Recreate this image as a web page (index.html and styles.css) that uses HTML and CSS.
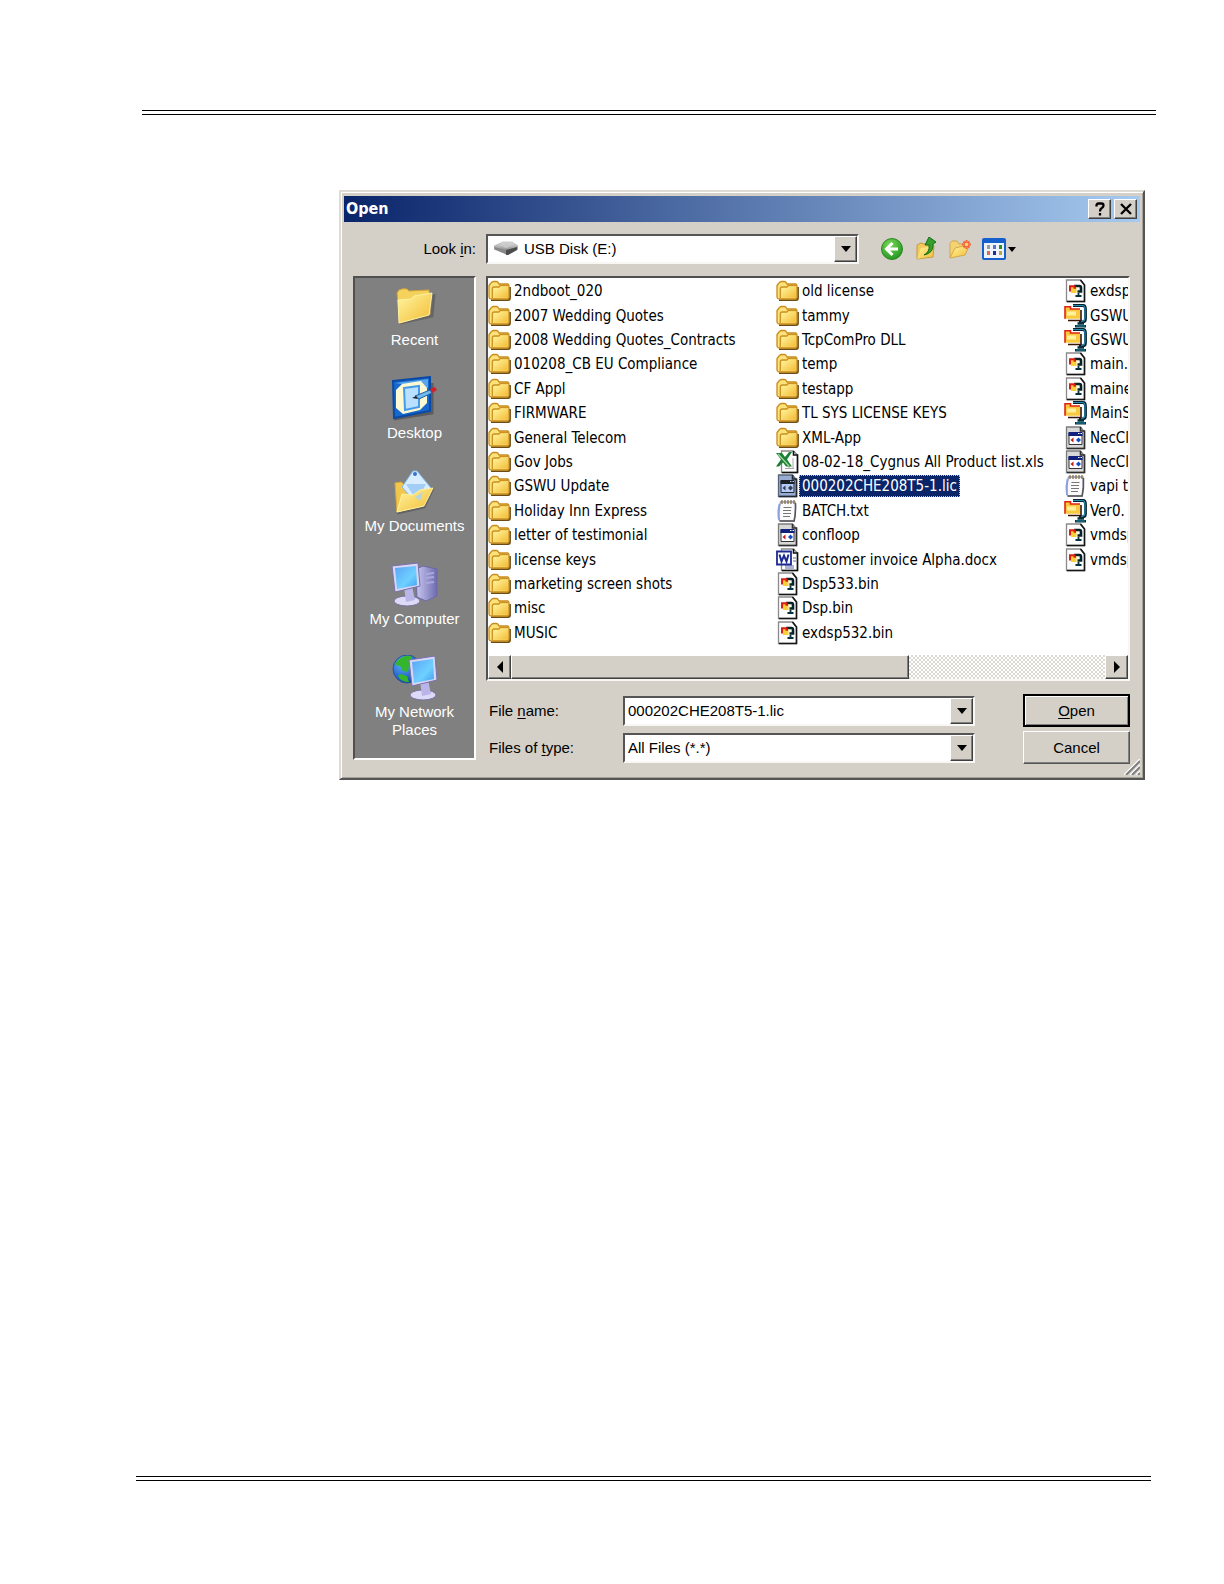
FILE: index.html
```html
<!DOCTYPE html>
<html lang="en">
<head>
<meta charset="utf-8">
<title>Open</title>
<link rel="stylesheet" href="styles.css">
</head>
<body>
<svg class="defs" width="0" height="0" aria-hidden="true">
  <defs>
    <linearGradient id="gold" x1="0" y1="0" x2="1" y2="1"><stop offset="0" stop-color="#fff6a0"/><stop offset="1" stop-color="#f3bb34"/></linearGradient>
    <linearGradient id="screen" x1="0" y1="0" x2="1" y2="1"><stop offset="0" stop-color="#5aa5f5"/><stop offset=".6" stop-color="#6fd0ff"/><stop offset="1" stop-color="#3f9df0"/></linearGradient>
    <linearGradient id="case" x1="0" y1="0" x2="1" y2="0"><stop offset="0" stop-color="#c9c8ee"/><stop offset="1" stop-color="#6e6bb0"/></linearGradient>
    <linearGradient id="metal" x1="0" y1="0" x2="0" y2="1"><stop offset="0" stop-color="#e4e4e4"/><stop offset="1" stop-color="#666"/></linearGradient>
    <radialGradient id="globe" cx=".35" cy=".3" r=".8"><stop offset="0" stop-color="#5db4ff"/><stop offset="1" stop-color="#0a3aa8"/></radialGradient>
    <radialGradient id="green" cx=".4" cy=".3" r=".8"><stop offset="0" stop-color="#7ad858"/><stop offset="1" stop-color="#1c8f1c"/></radialGradient>
  </defs>
  <symbol id="folder" viewBox="0 0 23 22">
    <path d="M3 20.200h17q2-.2 2-2.200V7" fill="none" stroke="#6b4d14" stroke-width="1.800"/>
    <path d="M1 16.500V5.500L3 3q1-1.500 2.500-1.500h3Q10 1.500 11 4h8.500q1.500.2 1.500 2v11q0 2-2 2H3.500Q1 19 1 16.500z" fill="#fbe27a" stroke="#c98a1c" stroke-width="1.300"/>
    <path d="M4.300 18V9q0-2 2-2h4.500l1.500-1.500H20" fill="none" stroke="#cd9122" stroke-width="1.300"/>
    <path d="M5.500 17.800V9q0-1 1-1H12l1.500-1.500H20v11.300z" fill="url(#gold)"/>
  </symbol>
  <symbol id="winzip" viewBox="0 0 23 24">
    <path d="M9 1.500h10q2.500 0 2.500 4v9q0 3.500-3 3.500h-3.500" fill="none" stroke="#04202e" stroke-width="2.800"/>
    <path d="M9 1.500h9.500q2.500 0 2.500 4v8q0 4-4 4" fill="none" stroke="#2a8fb4" stroke-width="1.200"/>
    <path d="M11 22.300h11M13.500 19.500h6.500" stroke="#06303c" stroke-width="2.400"/><path d="M12 22h9" stroke="#268ca8" stroke-width="1"/>
    <path d="M17 6v10.500H4" fill="none" stroke="#3a1404" stroke-width="1.600"/>
    <path d="M1 14.800V2.800h5.500V5H16v9.800z" fill="#f9c93e"/>
    <path d="M1 14.800V2.800h5.500V5H16" fill="none" stroke="#e02414" stroke-width="1.600"/>
    <path d="M3 7.500h9v4H3z" fill="#fff0a0"/>
  </symbol>
  <symbol id="page" viewBox="0 0 23 24">
    <path d="M2.500 1h14l4 5v16.500h-18z" fill="#fdfdfd" stroke="#8a8a8a" stroke-width="1.300"/>
    <path d="M16.500 1l4 5v16.500H3" fill="none" stroke="#161616" stroke-width="1.600"/>
  </symbol>
  <symbol id="bin" viewBox="0 0 23 24">
    <use href="#page"/>
    <path d="M10 7h5.500q1.500 0 1.500 2v3.500h-3.500" fill="none" stroke="#072326" stroke-width="2.600"/><path d="M11.500 17h6M14.500 14v3" stroke="#06303c" stroke-width="1.800"/>
    <path d="M7 8h5.500v6H7z" fill="#f8d03a"/><path d="M6 12.500V7.300h4.500v1.500H12" fill="none" stroke="#dc1e10" stroke-width="2"/>
  </symbol>
  <symbol id="prog" viewBox="0 0 23 24">
    <path d="M2.500 1h14l4 5v16.500h-18z" fill="#d8d8d8" stroke="#7c7c7c" stroke-width="1.300"/>
    <path d="M16.500 1v4h4v17.500H3" fill="none" stroke="#303030" stroke-width="1.600"/>
    <path d="M5 7h13v11.500H5z" fill="#fff" stroke="#333" stroke-width="1"/><path d="M4.500 6h14v4h-14z" fill="#10207c"/><path d="M14 7.500h1.500M16.500 7.500H18" stroke="#fff"/>
    <path d="M6.500 14l3-2.500v5z" fill="#c81818"/><path d="M12 14l2.500-2.500L17 14l-2.500 2.500z" fill="#1848c0"/>
  </symbol>
  <symbol id="text" viewBox="0 0 23 24">
    <path d="M4.500 3h14.500q1 10-1 19H3.500q-1.500-8 1-19z" fill="#fbfbfb" stroke="#8f98b8" stroke-width="1.300"/>
    <path d="M19.500 4q.5 10-1.300 18H4" fill="none" stroke="#565656" stroke-width="1.500"/>
    <path d="M3.500 5Q1.500 13 3 21" fill="none" stroke="#8ba2e0" stroke-width="1.800"/>
    <path d="M6 5V1m3 4V1m3 4V1m3 4V1m3 4V1" stroke="#8d7750" stroke-width="1.400"/>
    <path d="M7.500 8.500h8M7 11.500h8M7 14.500h8M7 17.500h7" stroke="#777" stroke-width="1.200"/>
  </symbol>
  <symbol id="excel" viewBox="0 0 23 24">
    <path d="M5.500 1h12l4 4v17.500h-16z" fill="#fff" stroke="#888" stroke-width="1.300"/><path d="M17.500 1v4h4v17.500H6" fill="none" stroke="#111" stroke-width="1.600"/>
    <path d="M9 18.500h9M17 8v11M13 14v5" stroke="#a9a9a9"/>
    <path d="M0 3h6l3 4 4-5h3l-5 7.500 5 7h-6l-3-4-4 4H0l5-7z" fill="#1d7f35"/><path d="M2 4l11 12" stroke="#9fdca0" stroke-width="1.200"/>
  </symbol>
  <symbol id="word" viewBox="0 0 23 24">
    <path d="M5.500 1h12l4 4v17.500h-16z" fill="#fff" stroke="#888" stroke-width="1.300"/><path d="M17.500 1v4h4v17.500H6" fill="none" stroke="#111" stroke-width="1.600"/>
    <path d="M17 10h3m-3 3h3m-11 5h9m-9 2h9" stroke="#5b69a8"/><path d="M1 3.500h14v13H1z" fill="#fff" stroke="#1c2a90" stroke-width="1.800"/>
    <path d="M3.500 6.500l2 7 2.500-6 2.500 6 2-7" fill="none" stroke="#1c2a90" stroke-width="2"/>
  </symbol>
  <symbol id="down" viewBox="0 0 10 6"><path d="M0 0h10L5 6z"/></symbol>
</svg>

<div class="page">
  <hr class="rule rule-top">

  <section class="dialog" role="dialog" aria-labelledby="dialog-title">
    <header class="titlebar">
      <h1 id="dialog-title">Open</h1>
      <button class="caption" type="button" aria-label="Help"><svg width="14" height="16" viewBox="0 0 14 16"><path d="M3.500 5.500V4.500Q3.500 2.500 5.500 2.500h3q2 0 2 2 0 1.500-1.700 2.500Q7 8 7 10.500M7 12v2.500" fill="none" stroke="#000" stroke-width="2.300"/></svg></button>
      <button class="caption" type="button" aria-label="Close"><svg width="14" height="16" viewBox="0 0 14 16"><path d="M2 3l10 10M12 3L2 13" stroke="#000" stroke-width="2.300"/></svg></button>
    </header>

    <div class="toolbar">
      <label class="look-label" for="look-in">Look <u>i</u>n:</label>
      <div class="combo look">
        <svg class="drive" width="24" height="16" viewBox="0 0 24 16"><path d="M0 5l9-4 9 0 6 4v3l-9 5h-3L0 8z" fill="url(#metal)" stroke="#999" stroke-width=".5"/><path d="M0 6l12 3v4L1 8.500z" fill="#888"/><path d="M12 9l11-3v3l-9 5h-2z" fill="#4c4c4c"/><path d="M5 4l8-2 7 2-8 3z" fill="#c9c9c9"/></svg>
        <select id="look-in"><option>USB Disk (E:)</option></select>
        <span class="arrow"><svg width="10" height="6"><use href="#down"/></svg></span>
      </div>
      <div class="tools">
        <button type="button" aria-label="Back"><svg width="24" height="24" viewBox="0 0 24 24"><circle cx="12" cy="12" r="10.500" fill="url(#green)" stroke="#2a8a20"/><path d="M12.500 6L6.500 12l6 6M7 12h11" fill="none" stroke="#fff" stroke-width="3"/></svg></button>
        <button type="button" aria-label="Up one level"><svg width="24" height="24" viewBox="0 0 24 24"><path d="M3 22V8l4-2 3 1h8l2 2-1 11z" fill="#f3c95a" stroke="#c79a3a"/><path d="M3 22l4-11 12-2-1 10z" fill="url(#gold)"/><path d="M10 18q6-3 5-10h-4L15 0l7 5-3 2q1 9-9 11z" fill="#35a02c" stroke="#176c18"/></svg></button>
        <button type="button" aria-label="Create new folder"><svg width="24" height="24" viewBox="0 0 24 24"><path d="M2 21V6l2-2h5l2 3h8v4" fill="#f3d374" stroke="#d2a84a"/><path d="M2 21l5-10 8-2h6l-4 9z" fill="url(#gold)" stroke="#d2a84a"/><path d="M18.500 3v9M14 7.500h9M15.500 4.500l6 6M21.500 4.500l-6 6" stroke="#f0683a" stroke-width="2"/><circle cx="18.500" cy="7.500" r="1.800" fill="#ffd08a"/></svg></button>
        <button type="button" aria-label="View menu"><svg width="34" height="24" viewBox="0 0 34 24"><rect x="1" y="2" width="22" height="20" rx="1" fill="#eef3fb" stroke="#1560cc" stroke-width="2"/><path d="M1 4h22" stroke="#1560cc" stroke-width="4"/><path d="M5 8h3v4H5z" fill="#9c9c9c"/><path d="M11 8h3v4h-3z" fill="#5874c8"/><path d="M17 8h3v4h-3z" fill="#2c8c2c"/><path d="M5 14h3v4H5z" fill="#e26a4c"/><path d="M11 14h3v4h-3z" fill="#1e2e9c"/><path d="M17 14h3v4h-3z" fill="#b8a440"/><path d="M26 10h8l-4 5z"/></svg></button>
      </div>
    </div>

    <div class="content">
      <nav class="places" aria-label="Places">
        <button type="button"><svg width="46" height="46" viewBox="0 0 46 46"><path d="M8 40L40 33l2-22" fill="none" stroke="#555" stroke-width="3" opacity=".6"/><path d="M5 10l2-3q4-2 8-1l2 2 20-1 1 24-30 9z" fill="#f4d25c" stroke="#d2a33a"/><path d="M7 40L6 17l13-1 3-3 18-3-3 22z" fill="url(#gold)" stroke="#fff0a4"/></svg>Recent</button>
        <button type="button"><svg width="46" height="46" viewBox="0 0 46 46"><path d="M2 43L40 37V7" fill="none" stroke="#444" stroke-width="3" opacity=".6"/><path d="M1 5l37-4v34L2 42z" fill="#1668cc" stroke="#0a4aa4" stroke-width="2"/><path d="M3 7l33-4v9z" fill="#5aa6ec"/><path d="M10 8l19-3 6 7v15l-7 7-17 4-7-6V14z" fill="#fdf9d2"/><path d="M12 12l15-2v21l-14 3z" fill="#b9e0ff" stroke="#469be8" stroke-width="2"/><path d="M23 20l15-6 2 3-13 6z" fill="#74b8ea" stroke="#1d61a6"/><path d="M38 13l5-2 2 3-5 3z" fill="#d0202a"/><path d="M20 22l4-2 2 3z" fill="#222"/></svg>Desktop</button>
        <button type="button"><svg width="46" height="46" viewBox="0 0 46 46"><path d="M5 44l27-6 9-19" fill="none" stroke="#444" stroke-width="3" opacity=".5"/><path d="M3 14l6-1 5 4 20 2-4 18L5 43z" fill="#f0c64c" stroke="#d8ab3c"/><path d="M10 18L21 2h4l14 17-14 16z" fill="#d8edff" stroke="#83b9ec"/><path d="M14 15h20l-9 17z" fill="#a2cdf5"/><circle cx="23" cy="5" r="2" fill="#3a70d0"/><path d="M5 43l5-18 11 1 7-5 13-2-9 18z" fill="url(#gold)" stroke="#fff0a0"/><path d="M23 28l8-5-3 9z" fill="#b4d5db"/></svg>My Documents</button>
        <button type="button"><svg width="46" height="46" viewBox="0 0 46 46"><path d="M24 7l7-3 14 3v27l-11 5-9-4z" fill="url(#case)" stroke="#6d69a6"/><path d="M31 6v31M34 12l8-1M34 16l8-1M34 21l8-1" stroke="#aba8df" stroke-width="2"/><ellipse cx="15" cy="39" rx="13" ry="5" fill="#dcdaf6" stroke="#77739f"/><path d="M12 25l8-1 3 14-9 2z" fill="#b9b5e8"/><path d="M0 4l26-3 2 23-25 6z" fill="#d8d5f5" stroke="#7672ab"/><path d="M3 6l21-2 1 19-20 4z" fill="url(#screen)"/></svg>My Computer</button>
        <button type="button"><svg width="46" height="46" viewBox="0 0 46 46"><circle cx="15" cy="14" r="14" fill="url(#globe)" stroke="#24549a"/><path d="M5 6q6-6 14-5l3 7-5 2-1 7-5-1-3-5-5-1zM8 19l7 2 2 6q-8 0-11-6z" fill="#35b52c"/><ellipse cx="31" cy="40" rx="13" ry="5" fill="#dcdaf6" stroke="#77739f"/><path d="M28 26l8-1 3 14-9 2z" fill="#b9b5e8"/><path d="M17 5l26-4 2 24-25 6z" fill="#d8d5f5" stroke="#7672ab"/><path d="M20 7l21-3 1 20-20 4z" fill="url(#screen)"/></svg>My Network Places</button>
      </nav>

      <div class="main">
        <div class="filebox">
          <ul class="files">
            <li><svg><use href="#folder"/></svg><span>2ndboot_020</span></li>
            <li><svg><use href="#folder"/></svg><span>2007 Wedding Quotes</span></li>
            <li><svg><use href="#folder"/></svg><span>2008 Wedding Quotes_Contracts</span></li>
            <li><svg><use href="#folder"/></svg><span>010208_CB EU Compliance</span></li>
            <li><svg><use href="#folder"/></svg><span>CF Appl</span></li>
            <li><svg><use href="#folder"/></svg><span>FIRMWARE</span></li>
            <li><svg><use href="#folder"/></svg><span>General Telecom</span></li>
            <li><svg><use href="#folder"/></svg><span>Gov Jobs</span></li>
            <li><svg><use href="#folder"/></svg><span>GSWU Update</span></li>
            <li><svg><use href="#folder"/></svg><span>Holiday Inn Express</span></li>
            <li><svg><use href="#folder"/></svg><span>letter of testimonial</span></li>
            <li><svg><use href="#folder"/></svg><span>license keys</span></li>
            <li><svg><use href="#folder"/></svg><span>marketing screen shots</span></li>
            <li><svg><use href="#folder"/></svg><span>misc</span></li>
            <li><svg><use href="#folder"/></svg><span>MUSIC</span></li>
            <li><svg><use href="#folder"/></svg><span>old license</span></li>
            <li><svg><use href="#folder"/></svg><span>tammy</span></li>
            <li><svg><use href="#folder"/></svg><span>TcpComPro DLL</span></li>
            <li><svg><use href="#folder"/></svg><span>temp</span></li>
            <li><svg><use href="#folder"/></svg><span>testapp</span></li>
            <li><svg><use href="#folder"/></svg><span>TL SYS LICENSE KEYS</span></li>
            <li><svg><use href="#folder"/></svg><span>XML-App</span></li>
            <li><svg><use href="#excel"/></svg><span>08-02-18_Cygnus All Product list.xls</span></li>
            <li class="selected"><svg><use href="#prog"/></svg><span>000202CHE208T5-1.lic</span></li>
            <li><svg><use href="#text"/></svg><span>BATCH.txt</span></li>
            <li><svg><use href="#prog"/></svg><span>confloop</span></li>
            <li><svg><use href="#word"/></svg><span>customer invoice Alpha.docx</span></li>
            <li><svg><use href="#bin"/></svg><span>Dsp533.bin</span></li>
            <li><svg><use href="#bin"/></svg><span>Dsp.bin</span></li>
            <li><svg><use href="#bin"/></svg><span>exdsp532.bin</span></li>
            <li><svg><use href="#bin"/></svg><span>exdsp</span></li>
            <li><svg><use href="#winzip"/></svg><span>GSWU</span></li>
            <li><svg><use href="#winzip"/></svg><span>GSWU</span></li>
            <li><svg><use href="#bin"/></svg><span>main.</span></li>
            <li><svg><use href="#bin"/></svg><span>maine</span></li>
            <li><svg><use href="#winzip"/></svg><span>MainS</span></li>
            <li><svg><use href="#prog"/></svg><span>NecCl</span></li>
            <li><svg><use href="#prog"/></svg><span>NecCl</span></li>
            <li><svg><use href="#text"/></svg><span>vapi t</span></li>
            <li><svg><use href="#winzip"/></svg><span>Ver0.</span></li>
            <li><svg><use href="#bin"/></svg><span>vmdsp</span></li>
            <li><svg><use href="#bin"/></svg><span>vmdsp</span></li>
          </ul>
          <div class="scrollbar">
            <button class="step" type="button" aria-label="Scroll left"><svg width="6" height="12"><path d="M6 0v12L0 6z"/></svg></button>
            <div class="track"><div class="thumb"></div></div>
            <button class="step" type="button" aria-label="Scroll right"><svg width="6" height="12"><path d="M0 0v12l6-6z"/></svg></button>
          </div>
        </div>

        <form class="fields">
          <label for="file-name">File <u>n</u>ame:</label>
          <div class="combo">
            <input id="file-name" type="text" value="000202CHE208T5-1.lic">
            <button class="arrow" type="button" aria-label="Recent names"><svg width="10" height="6"><use href="#down"/></svg></button>
          </div>
          <button class="push default" type="submit"><u>O</u>pen</button>
          <label for="file-type">Files of <u>t</u>ype:</label>
          <div class="combo">
            <select id="file-type"><option>All Files (*.*)</option></select>
            <span class="arrow"><svg width="10" height="6"><use href="#down"/></svg></span>
          </div>
          <button class="push" type="button">Cancel</button>
        </form>
      </div>
    </div>
    <svg class="grip" width="16" height="16" viewBox="0 0 16 16"><path d="M0 16L16 0M6 16L16 6M12 16l4-4" stroke="#fff" stroke-width="1.500"/><path d="M2 16L16 2M8 16l8-8M14 16l2-2" stroke="#808080" stroke-width="2"/></svg>
  </section>

  <hr class="rule rule-bottom">
</div>
</body>
</html>
```
FILE: styles.css
```css
* { box-sizing: border-box; }

:root {
  --face: #d4d0c8;
  --shade: #808080;
  --dark: #404040;
}

body {
  margin: 0;
  background: #fff;
  color: #000;
  font-family: "Liberation Sans", Arial, sans-serif;
  font-size: 15px;
  line-height: 18px;
}

button, input, select { font: inherit; color: inherit; }
button { padding: 0; border: 0; background: none; }
svg { display: block; flex: none; }
.defs { position: absolute; }
u { text-underline-offset: 2px; }

.page {
  display: flex;
  flex-direction: column;
  min-height: 100vh;
  padding: 110px 0 103px;
}

.rule {
  height: 5px;
  border: solid #000;
  border-width: 1px 0;
}
.rule-top { margin: 0 68px 75px 142px; }
.rule-bottom { margin: auto 73px 0 136px; }

.dialog {
  position: relative;
  margin: 0 79px 0 339px;
  padding: 4px 3px 14px;
  background: var(--face);
  border: 2px solid;
  border-color: #dedbd4 #555 #555 #dedbd4;
  box-shadow: inset 1px 1px #fff, inset -1px -1px #a5a29c;
}

.titlebar {
  display: flex;
  align-items: center;
  gap: 3px;
  height: 26px;
  padding: 0 3px 0 2px;
  background: linear-gradient(90deg, #0a246a, #a6caf0);
}
.titlebar h1 {
  flex: 1;
  margin: 0;
  color: #fff;
  font: bold 16px/20px "DejaVu Sans Condensed", "DejaVu Sans", sans-serif;
}

.caption, .arrow, .step, .thumb {
  display: flex;
  align-items: center;
  justify-content: center;
  background: var(--face);
  border: 1px solid;
  border-color: #fff var(--dark) var(--dark) #fff;
  box-shadow: inset -1px -1px var(--shade);
}
.caption { width: 23px; height: 20px; }

.toolbar {
  display: flex;
  align-items: center;
  height: 54px;
  padding: 0 10px;
}
.look-label { width: 132px; padding-right: 10px; text-align: right; }

.combo {
  display: flex;
  align-items: center;
  height: 30px;
  background: #fff;
  border: 2px solid;
  border-color: #555 #f8f7f4 #f8f7f4 #555;
}
.combo input, .combo select {
  flex: 1;
  min-width: 0;
  height: 100%;
  padding: 0 3px;
  border: 0;
  background: none;
  appearance: none;
  outline: 0;
}
.combo .arrow { width: 23px; height: 100%; }
.look { flex: 0 1 373px; }
.look select { padding-left: 6px; }
.drive { margin-left: 6px; }

.tools { display: flex; gap: 10px; margin-left: 21px; }

.content { display: flex; gap: 10px; padding: 0 10px 0 9px; }

.places {
  display: flex;
  flex-direction: column;
  gap: 27px;
  width: 123px;
  height: 484px;
  padding-top: 5px;
  background: #808080;
  border: 2px solid;
  border-color: #505050 #fff #fff #505050;
}
.places button {
  display: flex;
  flex-direction: column;
  align-items: center;
  gap: 2px;
  padding: 0 16px;
  color: #fff;
  white-space: nowrap;
}
.places button:last-child { white-space: normal; }

.main { flex: 1; min-width: 0; }

.filebox {
  height: 405px;
  background: #fff;
  border: 2px solid;
  border-color: #505050 #f8f7f4 #f8f7f4 #505050;
}
.files {
  display: grid;
  grid-auto-flow: column;
  grid-template-rows: repeat(15, 1fr);
  grid-auto-columns: 288px;
  height: 377px;
  margin: 0;
  padding: 1px 0 10px;
  overflow: hidden;
  list-style: none;
  font: 15px/22px "DejaVu Sans Condensed", "DejaVu Sans", sans-serif;
}
.files li { display: flex; align-items: center; white-space: nowrap; }
.files svg { width: 23px; height: 24px; }
.files span { padding: 0 3px; }
.selected svg { filter: brightness(.65) sepia(1) hue-rotate(180deg); }
.selected span { background: #0a246a; color: #fff; outline: 1px dotted #d6c27a; outline-offset: -1px; }

.scrollbar { display: flex; height: 24px; }
.step { width: 23px; }
.track {
  flex: 1;
  background: repeating-conic-gradient(#fff 0 25%, #dcd9d2 0 50%) 0 0 / 4px 4px;
}
.thumb { width: 67%; height: 100%; }

.fields {
  display: grid;
  grid-template-columns: 135px minmax(0, 352px) 1fr;
  gap: 4px 2px;
  align-items: center;
  margin-top: 13px;
}
.fields label { padding-left: 3px; }

.push {
  justify-self: end;
  width: 107px;
  height: 33px;
  background: var(--face);
  border: 1px solid;
  border-color: #fff #555 #555 #fff;
  box-shadow: inset -1px -1px var(--shade);
}
.push.default { border: 2px solid #000; box-shadow: inset 1px 1px #fff, inset -1px -1px var(--shade); }

.grip { position: absolute; right: 3px; bottom: 3px; }
```
